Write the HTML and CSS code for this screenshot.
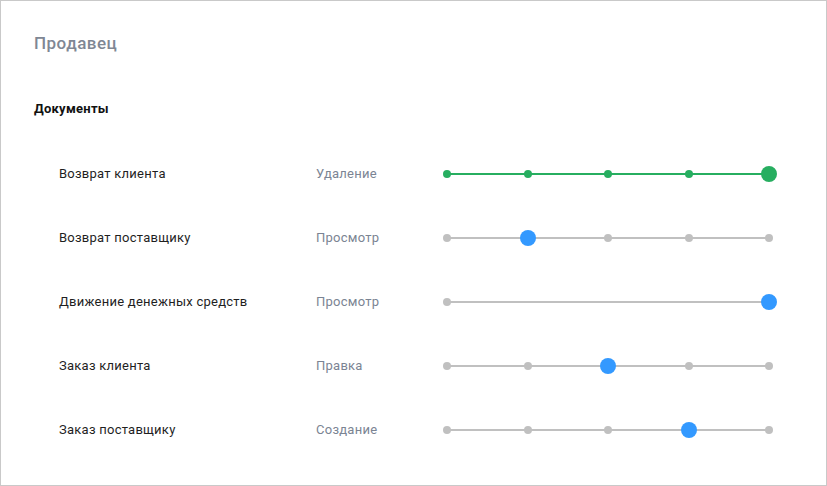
FILE: index.html
```html
<!DOCTYPE html>
<html>
<head>
    <meta charset="utf-8" />
    <title>Продавец</title>
    <link rel="stylesheet" href="styles.css">
</head>
<body>
    <div class="panel">
        <h1 class="title">Продавец</h1>
        <h2 class="section">Документы</h2>
        <ul class="rights">
            <li class="row">
                <span class="name">Возврат клиента</span>
                <span class="level">Удаление</span>
                <div class="track full">
                    <span class="stop"><i></i></span>
                    <span class="stop"><i></i></span>
                    <span class="stop"><i></i></span>
                    <span class="stop"><i></i></span>
                    <span class="stop"><i class="knob"></i></span>
                </div>
            </li>
            <li class="row">
                <span class="name">Возврат поставщику</span>
                <span class="level">Просмотр</span>
                <div class="track">
                    <span class="stop"><i></i></span>
                    <span class="stop"><i class="knob"></i></span>
                    <span class="stop"><i></i></span>
                    <span class="stop"><i></i></span>
                    <span class="stop"><i></i></span>
                </div>
            </li>
            <li class="row">
                <span class="name">Движение денежных средств</span>
                <span class="level">Просмотр</span>
                <div class="track">
                    <span class="stop"><i></i></span>
                    <span class="stop"><i class="knob"></i></span>
                </div>
            </li>
            <li class="row">
                <span class="name">Заказ клиента</span>
                <span class="level">Правка</span>
                <div class="track">
                    <span class="stop"><i></i></span>
                    <span class="stop"><i></i></span>
                    <span class="stop"><i class="knob"></i></span>
                    <span class="stop"><i></i></span>
                    <span class="stop"><i></i></span>
                </div>
            </li>
            <li class="row">
                <span class="name">Заказ поставщику</span>
                <span class="level">Создание</span>
                <div class="track">
                    <span class="stop"><i></i></span>
                    <span class="stop"><i></i></span>
                    <span class="stop"><i></i></span>
                    <span class="stop"><i class="knob"></i></span>
                    <span class="stop"><i></i></span>
                </div>
            </li>
        </ul>
    </div>
</body>
</html>
```

FILE: styles.css
```css
html, body {
    margin: 0;
    padding: 0;
    background: #fff;
}

body {
    font: 13px/20px Roboto, "Liberation Sans", Arial, sans-serif;
    letter-spacing: 0.25px;
    color: #1f1f1f;
}

.panel {
    box-sizing: border-box;
    width: 827px;
    height: 486px;
    border: 1px solid #c9c9c9;
    padding: 32px 0 0 33px;
}

.title {
    margin: 0;
    font-size: 17px;
    line-height: 20px;
    font-weight: 500;
    letter-spacing: 0.5px;
    color: #7f8794;
}

.section {
    margin: 46px 0 0;
    font-size: 13px;
    line-height: 20px;
    font-weight: 700;
    color: #111;
}

.rights {
    list-style: none;
    margin: 23px 0 0;
    padding: 0 0 0 25px;
}

    .rights .row {
        display: flex;
        align-items: center;
        height: 64px;
    }

    .rights .name {
        width: 257px;
        flex: none;
    }

    .rights .level {
        width: 131px;
        flex: none;
        color: #7b8493;
    }

.track {
    position: relative;
    display: flex;
    justify-content: space-between;
    align-items: center;
    width: 322px;
    height: 16px;
}

    .track::before {
        content: '';
        position: absolute;
        left: 0;
        right: 0;
        top: 7px;
        height: 2px;
        background: #c0c0c0;
    }

    .track .stop {
        position: relative;
        width: 0;
        display: flex;
        justify-content: center;
    }

    .track i {
        flex: none;
        width: 8px;
        height: 8px;
        border-radius: 50%;
        background: #c0c0c0;
    }

    .track i.knob {
        width: 16px;
        height: 16px;
        background: #3399ff;
    }

    .track.full::before,
    .track.full i {
        background: #27ae60;
    }
```
